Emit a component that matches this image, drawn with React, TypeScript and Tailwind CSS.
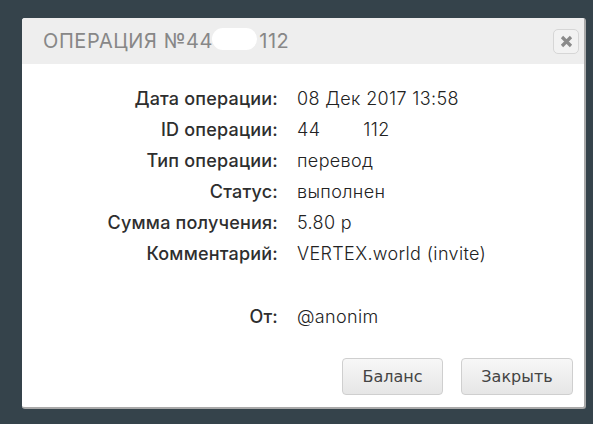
import React from "react";

const rows: [string, React.ReactNode][] = [
  ["Дата операции:", "08 Дек 2017 13:58"],
  [
    "ID операции:",
    <span className="relative inline-block">
      44<span className="inline-block w-[43px]"></span>112
    </span>,
  ],
  ["Тип операции:", "перевод"],
  ["Статус:", "выполнен"],
  ["Сумма получения:", "5.80 р"],
  ["Комментарий:", "VERTEX.world (invite)"],
];

export default function App() {
  return (
    <div className="min-h-screen w-full bg-[#35434b] pl-[22px] pt-[18px]">
      <div className="w-[564px] h-[391px] rounded-[3px] bg-white border-r-[2px] border-b-[2px] border-[#a9a9a9] flex flex-col overflow-hidden">
        <div className="h-[46px] bg-[#eeeeee] flex items-center justify-between pl-[21px] pr-[5px]">
          <div
            className="relative text-[20px] tracking-[0.6px] text-[#878787] leading-none"
            style={{ fontFamily: "Inter, 'Liberation Sans', sans-serif" }}
          >
            ОПЕРАЦИЯ №44<span className="inline-block w-[46px]"></span>112
            <span className="absolute left-[169px] top-[-3px] h-[22px] w-[45px] rounded-full bg-white"></span>
          </div>
          <button className="w-[26px] h-[25px] rounded-[5px] border border-[#d6d6d6] bg-[#f2f2f2] flex items-center justify-center">
            <svg width="13" height="13" viewBox="0 0 13 13">
              <path d="M2 2 L11 11 M11 2 L2 11" stroke="#8a8a8a" strokeWidth="3.2" strokeLinecap="butt" />
            </svg>
          </button>
        </div>
        <div
          className="flex-1 flex flex-col pt-[19px] text-[18px] text-[#333]"
          style={{ fontFamily: "Inter, 'Liberation Sans', sans-serif" }}
        >
          {rows.map(([l, v], i) => (
            <div key={i} className="flex h-[31px] items-center">
              <div className="w-[256px] text-right font-medium tracking-[0.2px] text-[#2e2e2e]">{l}</div>
              <div className="pl-[19px] font-light tracking-[0.35px] text-[#222]">{v}</div>
            </div>
          ))}
          <div className="h-[32px]"></div>
          <div className="flex h-[31px] items-center">
            <div className="w-[256px] text-right font-medium tracking-[0.2px] text-[#2e2e2e]">От:</div>
            <div className="pl-[19px] font-light tracking-[0.35px] text-[#222]">@anonim</div>
          </div>
          <div className="flex-1"></div>
          <div
            className="flex justify-end gap-[18px] pr-[11px] pb-[12px]"
            style={{ fontFamily: "'DejaVu Sans', sans-serif" }}
          >
            <button className="w-[101px] h-[37px] rounded-[4px] border border-[#cfcfcf] bg-gradient-to-b from-[#f7f7f7] to-[#e6e6e6] text-[16px] text-[#444]">
              Баланс
            </button>
            <button className="w-[112px] h-[37px] rounded-[4px] border border-[#cfcfcf] bg-gradient-to-b from-[#f7f7f7] to-[#e6e6e6] text-[16px] text-[#444]">
              Закрыть
            </button>
          </div>
        </div>
      </div>
    </div>
  );
}
